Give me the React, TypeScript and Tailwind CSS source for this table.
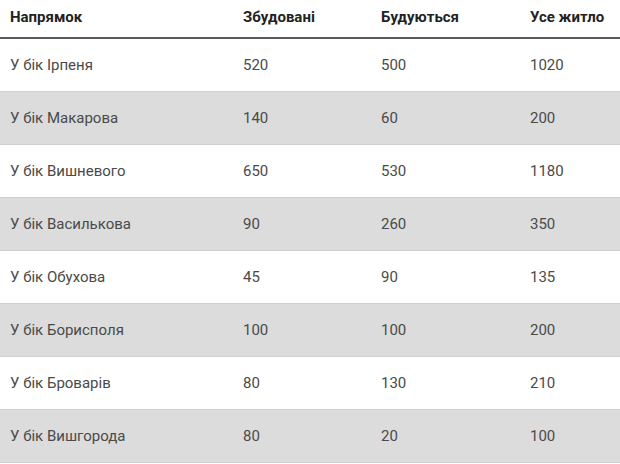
import React from 'react';

const ROWS: [string, string, string, string][] = [
  ['У бік Ірпеня', '520', '500', '1020'],
  ['У бік Макарова', '140', '60', '200'],
  ['У бік Вишневого', '650', '530', '1180'],
  ['У бік Василькова', '90', '260', '350'],
  ['У бік Обухова', '45', '90', '135'],
  ['У бік Борисполя', '100', '100', '200'],
  ['У бік Броварів', '80', '130', '210'],
  ['У бік Вишгорода', '80', '20', '100'],
];

const HEADERS = ['Напрямок', 'Збудовані', 'Будуються', 'Усе житло'];

const App: React.FC = () => {
  return (
    <div className="w-[620px] h-[464px] overflow-hidden bg-white" style={{ fontFamily: 'Roboto, "Noto Sans", sans-serif' }}>
      <div className="grid grid-cols-[233px_138px_149px_1fr] h-[39px] border-b-2 border-[#5a5a5a] items-center pb-[3px]">
        {HEADERS.map(h => (
          <div key={h} className="pl-[10px] text-[15px] font-bold text-[#222]">{h}</div>
        ))}
      </div>
      {ROWS.map((row, i) => (
        <div
          key={row[0]}
          className={`grid grid-cols-[233px_138px_149px_1fr] h-[53px] items-center border-b border-[#cfcfcf] ${i % 2 === 1 ? 'bg-[#dcdcdc]' : 'bg-white'}`}
        >
          {row.map((cell, j) => (
            <div key={j} className="pl-[10px] text-[15px] text-[#4a4a4a]">{cell}</div>
          ))}
        </div>
      ))}
    </div>
  );
};

export default App;
